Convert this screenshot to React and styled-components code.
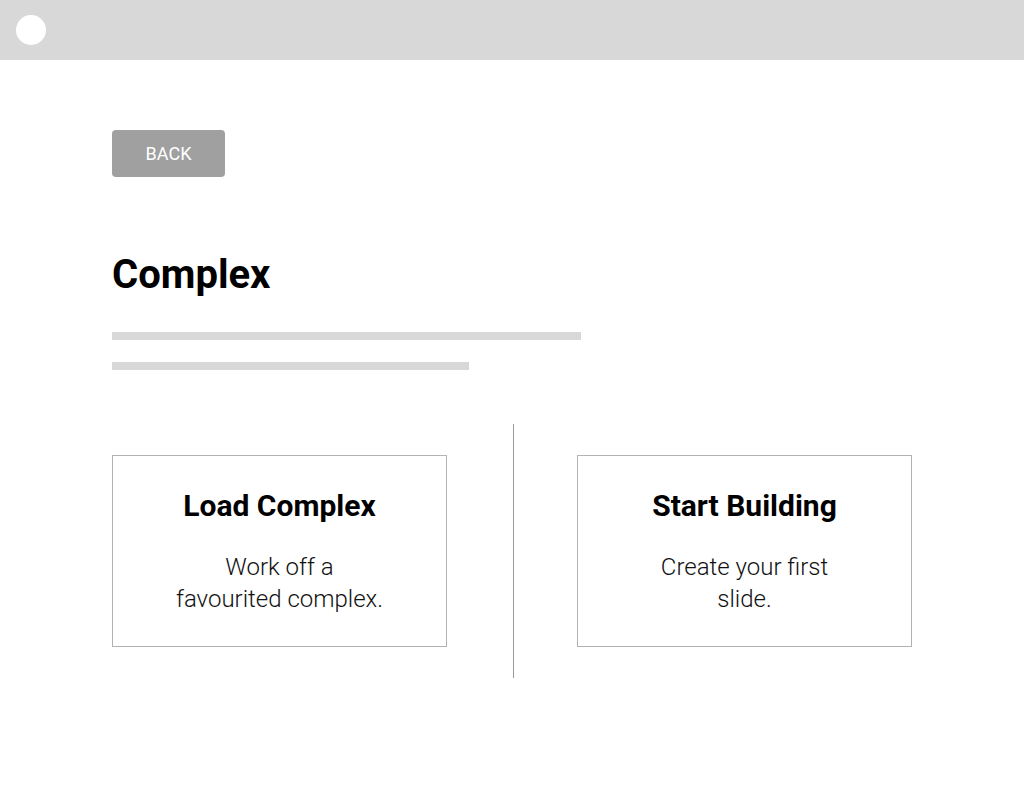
import React from 'react';
import styled, { createGlobalStyle } from 'styled-components';

const GlobalStyle = createGlobalStyle`
  body {
    margin: 0;
    background: #ffffff;
    font-family: Roboto, "Liberation Sans", sans-serif;
    color: #000000;
  }
`;

const TopBar = styled.header`
  height: 60px;
  background: #d8d8d8;
  display: flex;
  align-items: center;
  padding-left: 16px;
`;

const Dot = styled.span`
  width: 30px;
  height: 30px;
  border-radius: 50%;
  background: #ffffff;
`;

const Content = styled.main`
  width: 800px;
  margin: 0 auto;
  padding-top: 70px;
  display: flex;
  flex-direction: column;
  align-items: flex-start;
`;

const BackButton = styled.button`
  width: 113px;
  height: 47px;
  border: none;
  border-radius: 4px;
  background: #a0a0a0;
  color: #ffffff;
  font-family: Roboto, "Liberation Sans", sans-serif;
  font-size: 18px;
  padding: 0;
  cursor: pointer;
`;

const Title = styled.h1`
  margin: 78px 0 0;
  font-size: 40px;
  line-height: 1;
  font-weight: 700;
`;

const Placeholder = styled.div`
  height: 8px;
  width: ${props => props.width}px;
  background: #d8d8d8;
  margin-top: ${props => props.gap}px;
`;

const OptionRow = styled.section`
  margin-top: 54px;
  width: 100%;
  display: grid;
  grid-template-columns: 335px 1fr 335px;
  align-items: center;
`;

const Divider = styled.div`
  justify-self: center;
  width: 1px;
  height: 254px;
  background: #9a9a9a;
  transform: translateX(1px);
`;

const OptionCard = styled.div`
  height: 192px;
  box-sizing: border-box;
  border: 1px solid #b3b3b3;
  padding-top: 35px;
  display: flex;
  flex-direction: column;
  align-items: center;
  text-align: center;
  cursor: pointer;
`;

const CardTitle = styled.h2`
  margin: 0;
  font-size: 30px;
  line-height: 1;
  font-weight: 700;
`;

const CardText = styled.p`
  margin: 30px 0 0;
  font-size: 24px;
  line-height: 32px;
  font-weight: 300;
  color: #111111;
`;

const options = [
  { title: 'Load Complex', lines: ['Work off a', 'favourited complex.'] },
  { title: 'Start Building', lines: ['Create your first', 'slide.'] },
];

const Card = ({ option }) => (
  <OptionCard>
    <CardTitle>{option.title}</CardTitle>
    <CardText>
      {option.lines[0]}
      <br />
      {option.lines[1]}
    </CardText>
  </OptionCard>
);

const App = () => (
  <>
    <GlobalStyle />
    <TopBar>
      <Dot />
    </TopBar>
    <Content>
      <BackButton>BACK</BackButton>
      <Title>Complex</Title>
      <Placeholder width={469} gap={37} />
      <Placeholder width={357} gap={22} />
      <OptionRow>
        <Card option={options[0]} />
        <Divider />
        <Card option={options[1]} />
      </OptionRow>
    </Content>
  </>
);

export default App;
